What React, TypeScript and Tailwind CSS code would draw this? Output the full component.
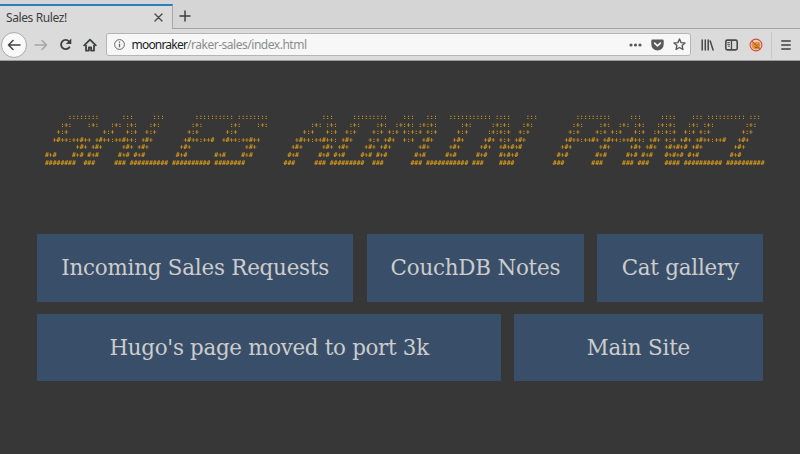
import type { ReactNode } from "react";

type Glyph = string[];

const GLYPHS: Record<string, Glyph> = {
  S: [
    "      ::::::::",
    "    :+:    :+:",
    "   +:+",
    "  +#++:++#++",
    "        +#+",
    "#+#    #+#",
    "########",
  ],
  A: [
    "          :::",
    "       :+: :+:",
    "     +:+   +:+",
    "   +#++:++#++:",
    "  +#+     +#+",
    " #+#     #+#",
    "###     ###",
  ],
  L: ["      :::", "     :+:", "    +:+", "   +#+", "  +#+", " #+#", "##########"],
  E: ["      ::::::::::", "     :+:", "    +:+", "   +#++:++#", "  +#+", " #+#", "##########"],
  D: [
    "      :::::::::",
    "     :+:    :+:",
    "    +:+    +:+",
    "   +#+    +:+",
    "  +#+    +#+",
    " #+#    #+#",
    "#########",
  ],
  M: [
    "        :::   :::",
    "      :+:+: :+:+:",
    "    +:+ +:+:+ +:+",
    "   +#+  +:+  +#+",
    "  +#+       +#+",
    " #+#       #+#",
    "###       ###",
  ],
  I: [
    "      :::::::::::",
    "         :+:",
    "        +:+",
    "       +#+",
    "      +#+",
    "     #+#",
    "###########",
  ],
  N: [
    "      ::::    :::",
    "     :+:+:   :+:",
    "    :+:+:+  +:+",
    "   +#+ +:+ +#+",
    "  +#+  +#+#+#",
    " #+#   #+#+#",
    "###    ####",
  ],
  P: ["      :::::::::", "     :+:    :+:", "    +:+    +:+", "   +#++:++#+", "  +#+", " #+#", "###"],
};

// Each letter with the column its baseline starts at.
const BANNER: [string, number][] = [
  ["S", 0], ["A", 10], ["L", 22], ["E", 33], ["S", 44],
  ["A", 62], ["D", 74], ["M", 85], ["I", 99], ["N", 111],
  ["P", 132], ["A", 142], ["N", 154], ["E", 166], ["L", 177],
];

function bannerRows(): string[] {
  return Array.from({ length: 7 }, (_, row) => {
    const cells: string[] = Array(187).fill(" ");
    for (const [letter, column] of BANNER) {
      GLYPHS[letter][row].split("").forEach((ch, i) => {
        if (ch !== " ") cells[column + i] = ch;
      });
    }
    return cells.join("");
  });
}

function TabStrip() {
  return (
    <div className="flex h-[29px] bg-[#d5d5d5]">
      <div className="mt-1 flex w-[173px] items-center justify-between border-t-2 border-r border-t-[#2581bd] border-r-[#a8a8a8] bg-[#dbdbdb] pr-[9px] pl-1.5">
        <span className="text-[12px] tracking-[-0.4px] text-[#3b3f40]">Sales Rulez!</span>
        <svg width="9" height="9" viewBox="0 0 9 9" stroke="#4a4a4a" strokeWidth="1.4" strokeLinecap="round">
          <path d="M1 1l7 7M8 1l-7 7" />
        </svg>
      </div>
      <div className="flex flex-1 border-b border-[#a3a3a3] pt-[10px] pl-[6px]">
        <svg width="12" height="12" viewBox="0 0 12 12" stroke="#3f4142" strokeWidth="1.5" strokeLinecap="round">
          <path d="M6 1v10M1 6h10" />
        </svg>
      </div>
    </div>
  );
}

function Toolbar() {
  return (
    <div className="flex h-8 items-center border-b border-[#9b9b9b] bg-[#dbdbdb]">
      <div className="ml-px flex size-[26px] items-center justify-center rounded-full border border-[#aaaaaa] bg-[#f9f9f9]">
        <svg width="14" height="12" viewBox="0 0 14 12" fill="none" stroke="#3f4142" strokeWidth="1.5" strokeLinecap="round" strokeLinejoin="round">
          <path d="M13 6H1.5M6 1.5L1.5 6L6 10.5" />
        </svg>
      </div>
      <svg className="ml-[7px]" width="14" height="12" viewBox="0 0 14 12" fill="none" stroke="#a5a5a5" strokeWidth="1.5" strokeLinecap="round" strokeLinejoin="round">
        <path d="M1 6h11.5M8 1.5L12.5 6L8 10.5" />
      </svg>
      <svg className="ml-[10.5px]" width="13" height="13" viewBox="0 0 13 13" fill="none">
        <path d="M10.3 9.3A4.6 4.6 0 1 1 10 3.3" stroke="#3f4142" strokeWidth="1.9" strokeLinecap="round" />
        <path d="M12.3 .6v5.5H6.8z" fill="#3f4142" />
      </svg>
      <svg className="ml-[11px]" width="14" height="14" viewBox="0 0 14 14" fill="none">
        <path d="M1.2 7.4L7 1.7l5.8 5.7" stroke="#3f4142" strokeWidth="1.8" strokeLinecap="round" strokeLinejoin="round" />
        <path d="M3 7v5.6h2.9V9.3h2.2v3.3H11V7" stroke="#3f4142" strokeWidth="1.8" strokeLinejoin="round" />
      </svg>
      <div className="ml-[9px] flex h-[23px] w-[585px] items-center rounded-[3px] border border-[#b5b5b5] bg-[#f7f7f7] pr-[4px] pl-[7px]">
        <svg width="11" height="11" viewBox="0 0 11 11" fill="none" stroke="#666" strokeWidth="1">
          <circle cx="5.5" cy="5.5" r="4.9" />
          <path d="M5.5 4.8v3.4M5.5 2.6v1.2" strokeWidth="1.3" />
        </svg>
        <span className="ml-[7px] flex-1 text-[12px] tracking-[-0.48px] whitespace-nowrap text-[#8a8e8d]">
          <span className="tracking-[-0.8px] text-[#202424]">moonraker</span>/raker-sales/index.html
        </span>
        <svg width="13" height="4" viewBox="0 0 13 4" fill="#595959">
          <circle cx="2" cy="2" r="1.6" />
          <circle cx="6.5" cy="2" r="1.6" />
          <circle cx="11" cy="2" r="1.6" />
        </svg>
        <svg className="ml-[9px]" width="13" height="12" viewBox="0 0 13 12">
          <path d="M1.5 .5h10a1.2 1.2 0 0 1 1.2 1.2V5.3a6.2 6.2 0 0 1-12.4 0V1.7A1.2 1.2 0 0 1 1.5 .5z" fill="#595959" />
          <path d="M3.6 4.1L6.5 6.9l2.9-2.8" fill="none" stroke="#f7f7f7" strokeWidth="1.6" strokeLinecap="round" strokeLinejoin="round" />
        </svg>
        <svg className="ml-[9px]" width="13" height="13" viewBox="0 0 13 13" fill="none" stroke="#595959" strokeWidth="1.4" strokeLinejoin="round">
          <path d="M6.5 1l1.6 3.6 3.9.4-2.9 2.6.8 3.9-3.4-2-3.4 2 .8-3.9L1 5l3.9-.4z" />
        </svg>
      </div>
      <svg className="ml-[10px]" width="13" height="12" viewBox="0 0 13 12" stroke="#4a4a4a" strokeWidth="1.5" strokeLinecap="round">
        <path d="M1.2 1v10M4.3 1v10M7.2 1v10M9.2 2l2.9 9" />
      </svg>
      <svg className="ml-[11px]" width="13" height="12" viewBox="0 0 13 12" fill="none" stroke="#4a4a4a">
        <rect x=".8" y="1.1" width="11.4" height="9.8" rx="1.6" strokeWidth="1.6" />
        <path d="M6.5 1.5v9" strokeWidth="1.3" />
        <path d="M2.3 3.6h2.6M2.3 5.4h2.6M3 7.2h1.9" strokeWidth=".9" />
      </svg>
      <svg className="ml-[11px]" width="14" height="14" viewBox="0 0 14 14" fill="none">
        <path d="M2.8 3.9l1.6 1.4 2.8-1.8 3.3.6 1 2.6-1 3.8-3.1 1.2-3.6-1.1-1.3-3.2z" fill="#e2962b" />
        <path d="M5.4 6.3l1.4.3M8.9 6.1l.8.9M5.6 9.2l2.9.5" stroke="#7d5a2c" strokeWidth="1" />
        <circle cx="7" cy="7" r="5.9" stroke="#d84a3a" strokeWidth="1.1" />
        <path d="M2.8 2.8l8.4 8.4" stroke="#d84a3a" strokeWidth="1.1" />
      </svg>
      <div className="ml-[8px] h-[26px] w-px bg-[#c7c7c7]" />
      <svg className="ml-[9px]" width="10" height="10" viewBox="0 0 10 10" stroke="#3f4142" strokeWidth="1.5" strokeLinecap="round">
        <path d="M.8 1h8.4M.8 5h8.4M.8 9h8.4" />
      </svg>
    </div>
  );
}

function LinkTile({ className, children }: { className: string; children: ReactNode }) {
  return (
    <a
      className={`flex items-center justify-center bg-[#394f69] font-['DejaVu_Serif',serif] text-[21.4px] whitespace-nowrap text-[#cccccc] ${className}`}
    >
      {children}
    </a>
  );
}

export default function App() {
  return (
    <div className="flex h-[454px] w-[800px] flex-col overflow-hidden bg-[#373737] font-['Noto_Sans',sans-serif]">
      <TabStrip />
      <Toolbar />
      <main className="flex flex-1 flex-col pt-[53px] pl-[37px]">
        <pre className="ml-[8px] h-[54px] font-['DejaVu_Sans_Mono',monospace] text-[6.4px] leading-[7.6px] text-[#e8a61a] will-change-transform [-webkit-text-stroke:0.08px_#e8a61a]">
          {bannerRows().join("\n")}
        </pre>
        <nav className="mt-[66px] flex flex-col gap-[12.5px]">
          <div className="flex h-[67.5px] gap-[13.3px] tracking-[-0.21px]">
            <LinkTile className="w-[316.3px]">Incoming Sales Requests</LinkTile>
            <LinkTile className="w-[217.6px]">CouchDB Notes</LinkTile>
            <LinkTile className="w-[165.6px]">Cat gallery</LinkTile>
          </div>
          <div className="flex h-[66.5px] gap-[12.5px]">
            <LinkTile className="w-[464.3px] pt-px tracking-[-0.3px]">Hugo's page moved to port 3k</LinkTile>
            <LinkTile className="w-[249.2px] pt-px tracking-[-0.15px]">Main Site</LinkTile>
          </div>
        </nav>
      </main>
    </div>
  );
}
